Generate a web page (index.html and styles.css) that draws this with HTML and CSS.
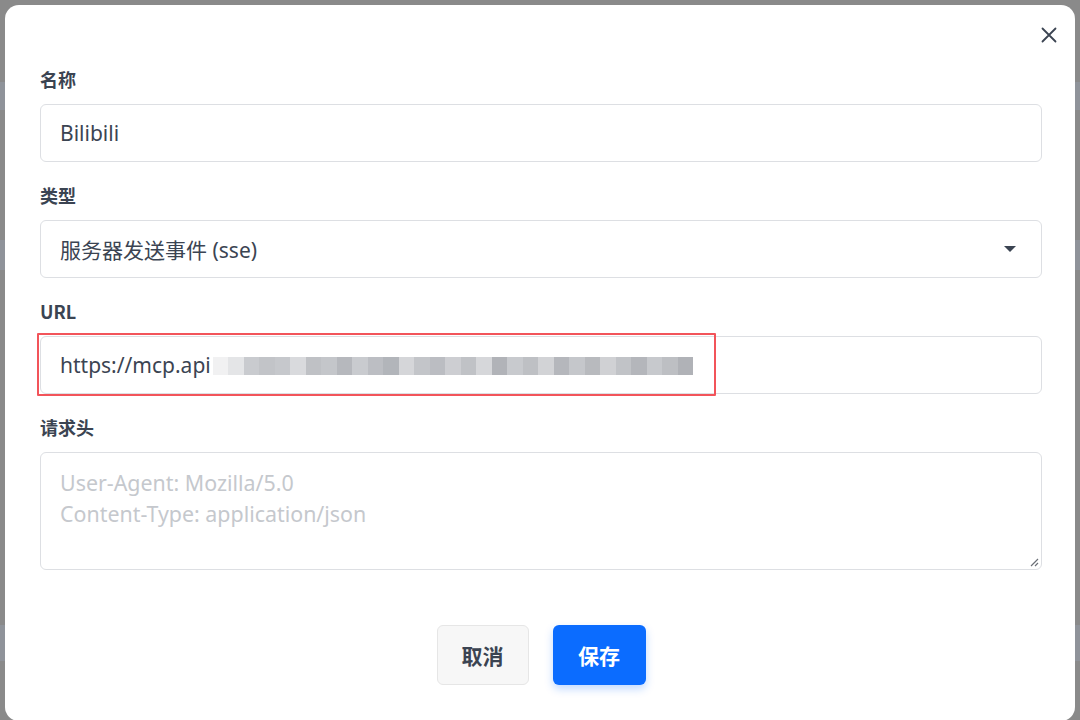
FILE: index.html
```html
<!DOCTYPE html>
<html lang="zh-CN">
<head>
<meta charset="utf-8">
<link rel="stylesheet" href="styles.css">
</head>
<body>
<div class="backdrop">
  <div class="bg-band band1"></div>
  <div class="bg-band band2"></div>
  <div class="bg-band band3"></div>
  <div class="modal">
    <button class="close" aria-label="关闭">
      <svg width="16" height="16" viewBox="0 0 16 16"><path d="M1.5 1.5 L14.5 14.5 M14.5 1.5 L1.5 14.5" stroke="#3b4452" stroke-width="1.8" stroke-linecap="round" fill="none"/></svg>
    </button>
    <div class="field">
      <label class="label">名称</label>
      <div class="input">Bilibili</div>
    </div>
    <div class="field">
      <label class="label">类型</label>
      <div class="input select">
        <span>服务器发送事件 (sse)</span>
        <svg class="caret" width="14" height="8" viewBox="0 0 14 8"><path d="M1 1 L13 1 L7 7 Z" fill="#3b4452"/></svg>
      </div>
    </div>
    <div class="field">
      <label class="label">URL</label>
      <div class="input url">
        <span>https://mcp.api</span>
        <span class="mosaic">
          <span class="m" style="background:#f1f1f2"></span>
          <span class="m" style="background:#e4e5e7"></span>
          <span class="m" style="background:#c9cbcf"></span>
          <span class="m" style="background:#c2c4c8"></span>
          <span class="m" style="background:#c6c8cc"></span>
          <span class="m" style="background:#d9dadd"></span>
          <span class="m" style="background:#bfc1c5"></span>
          <span class="m" style="background:#c4c6ca"></span>
          <span class="m" style="background:#b6b8bd"></span>
          <span class="m" style="background:#c9cbcf"></span>
          <span class="m" style="background:#bcbec3"></span>
          <span class="m" style="background:#b2b5ba"></span>
          <span class="m" style="background:#d5d6d9"></span>
          <span class="m" style="background:#c3c5c9"></span>
          <span class="m" style="background:#bbbdc2"></span>
          <span class="m" style="background:#cdced2"></span>
          <span class="m" style="background:#c0c2c6"></span>
          <span class="m" style="background:#d6d7da"></span>
          <span class="m" style="background:#b1b3b8"></span>
          <span class="m" style="background:#c8cace"></span>
          <span class="m" style="background:#bec0c4"></span>
          <span class="m" style="background:#d2d3d6"></span>
          <span class="m" style="background:#b5b7bc"></span>
          <span class="m" style="background:#c5c7cb"></span>
          <span class="m" style="background:#b8babe"></span>
          <span class="m" style="background:#d0d1d4"></span>
          <span class="m" style="background:#c1c3c7"></span>
          <span class="m" style="background:#b4b6bb"></span>
          <span class="m" style="background:#c7c9cd"></span>
          <span class="m" style="background:#bdbfc3"></span>
          <span class="m" style="background:#b0b2b7"></span>
        </span>
      </div>
      <div class="highlight"></div>
    </div>
    <div class="field">
      <label class="label">请求头</label>
      <div class="input textarea">
        <div class="ph">User-Agent: Mozilla/5.0</div>
        <div class="ph">Content-Type: application/json</div>
        <svg class="grip" width="10" height="10" viewBox="0 0 10 10"><path d="M9 2 L2 9 M9 6 L6 9" stroke="#6b6f76" stroke-width="1.2" fill="none"/></svg>
      </div>
    </div>
    <div class="actions">
      <button class="btn cancel">取消</button>
      <button class="btn save">保存</button>
    </div>
  </div>
</div>
</body>
</html>
```
FILE: styles.css
```css
* { box-sizing: border-box; }
html, body { margin: 0; padding: 0; }
body {
  width: 1080px;
  height: 720px;
  overflow: hidden;
  background: #8a8a8a;
  font-family: "Noto Sans", "Noto Sans CJK SC", sans-serif;
}
.backdrop {
  position: relative;
  width: 1080px;
  height: 720px;
  padding: 5px 5px 0 5px;
  display: flex;
}
.bg-band {
  position: absolute;
  left: 0;
  width: 1080px;
  background: #8f939a;
}
.band1 { top: 82px; height: 28px; }
.band2 { top: 240px; height: 30px; }
.band3 { top: 625px; height: 36px; }
.modal {
  position: relative;
  flex: 1;
  height: 716px;
  background: #ffffff;
  border-radius: 14px;
  padding: 62px 33px 0 35px;
  display: flex;
  flex-direction: column;
}
.close {
  position: absolute;
  top: 18px;
  right: 14px;
  width: 24px;
  height: 24px;
  border: 0;
  background: transparent;
  padding: 4px;
  display: flex;
  align-items: center;
  justify-content: center;
}
.field {
  position: relative;
  display: flex;
  flex-direction: column;
  margin-bottom: 21px;
}
.label {
  font-family: "Noto Sans CJK SC", "Noto Sans", sans-serif;
  font-weight: 700;
  font-size: 18px;
  line-height: 24px;
  color: #3b4452;
  margin-bottom: 13px;
}
.input {
  height: 58px;
  border: 1.5px solid #dddfe3;
  border-radius: 6px;
  padding: 0 19px;
  display: flex;
  align-items: center;
  font-size: 21px;
  color: #3b4452;
  font-family: "Noto Sans", "Noto Sans CJK SC", sans-serif;
}
.select { justify-content: space-between; padding-right: 24px; }
.caret { display: block; }
.url { gap: 0; }
.mosaic {
  display: flex;
  height: 18px;
  margin-left: 2px;
  margin-top: 2px;
}
.mosaic .m { width: 15.5px; height: 18px; }
.highlight {
  position: absolute;
  left: -3px;
  top: 34px;
  width: 679px;
  height: 63px;
  border: 2.5px solid #f2545a;
  border-radius: 1px;
}
.textarea {
  position: relative;
  height: 118px;
  flex-direction: column;
  align-items: flex-start;
  padding-top: 14px;
}
.ph {
  color: #c5c8cd;
  line-height: 31px;
  font-size: 21.4px;
}
.grip {
  position: absolute;
  right: 2px;
  bottom: 2px;
}
.actions {
  display: flex;
  justify-content: center;
  gap: 24px;
  margin-top: 34px;
}
.btn {
  height: 60px;
  border-radius: 6px;
  font-family: "Noto Sans CJK SC", sans-serif;
  font-weight: 700;
  font-size: 21px;
  padding: 0;
}
.cancel {
  width: 92px;
  background: #f7f7f7;
  border: 1.5px solid #e6e6e6;
  color: #3b4452;
}
.save {
  width: 93px;
  background: #0b6cff;
  border: 0;
  color: #ffffff;
  box-shadow: 0 4px 8px rgba(11, 108, 255, 0.25);
}
```
